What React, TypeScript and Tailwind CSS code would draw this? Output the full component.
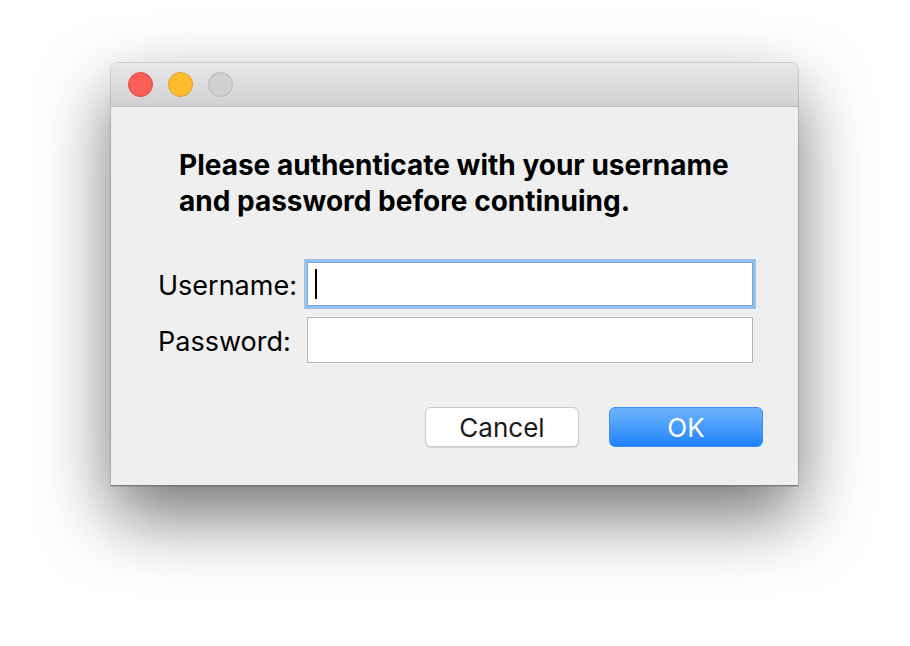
import React from 'react';

const font = { fontFamily: 'Inter, "Liberation Sans", Arial, sans-serif' };

const Light: React.FC<{ fill: string; ring: string }> = ({ fill, ring }) => (
  <span className={`block w-[25px] h-[25px] rounded-full border ${fill} ${ring}`} />
);

const App: React.FC = () => {
  return (
    <div className="w-[910px] h-[646px] bg-white pt-[63px] pl-[111px]" style={font}>
      <div className="w-[687px] h-[423px] flex flex-col rounded-t-[6px] shadow-[0_30px_70px_rgba(0,0,0,0.55),0_0_0_1px_rgba(0,0,0,0.12)] bg-[#efefef] border-b border-[#7a7a7a]">
        {/* title bar */}
        <div className="h-[44px] shrink-0 rounded-t-[6px] bg-gradient-to-b from-[#e9e7e9] to-[#d2d0d2] border-b border-[#bdbbbd] flex items-center gap-[15px] pl-[17px]">
          <Light fill="bg-[#fc5f57]" ring="border-[#df4840]" />
          <Light fill="bg-[#fdbc2e]" ring="border-[#dfa024]" />
          <Light fill="bg-[#d1d0d1]" ring="border-[#b9b8b9]" />
        </div>

        <div className="flex-1 flex flex-col">
          <h1 className="mt-[40px] ml-[68px] text-[28px] leading-[36px] font-bold text-black">
            Please authenticate with your username
            <br />
            and password before continuing.
          </h1>

          <div className="mt-[43px] flex flex-col gap-[11px]">
            <div className="flex items-center">
              <label className="relative top-[2px] ml-[47px] w-[149px] text-[27px] leading-[32px] text-black">Username:</label>
              <div className="w-[446px] h-[44px] border border-[#7ba5da] bg-white shadow-[0_0_0_3px_#96c2f0] flex items-center pl-[7px]">
                <span className="block w-[2px] h-[30px] bg-black" />
              </div>
            </div>
            <div className="flex items-center">
              <label className="relative top-[2px] ml-[47px] w-[149px] text-[27px] leading-[32px] text-black">Password:</label>
              <div className="w-[446px] h-[46px] border border-[#b4b4b4] bg-white" />
            </div>
          </div>

          <div className="mt-[44px] flex justify-end gap-[30px] pr-[35px]">
            <button className="w-[154px] h-[40px] rounded-[6px] bg-white border border-[#c9c9c9] shadow-[0_1px_1px_rgba(0,0,0,0.12)] text-[26px] text-[#1a1a1a]">
              Cancel
            </button>
            <button className="w-[154px] h-[40px] rounded-[6px] bg-gradient-to-b from-[#6db3fa] to-[#1a82fb] border border-[#3b8ff5] text-[26px] text-white">
              OK
            </button>
          </div>
        </div>
      </div>
    </div>
  );
};

export default App;
